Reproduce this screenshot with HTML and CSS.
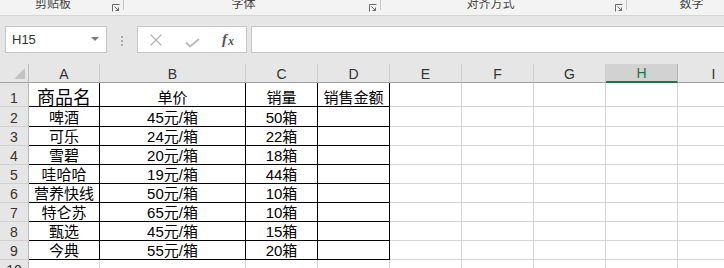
FILE: index.html
```html
<!DOCTYPE html>
<html lang="zh-CN">
<head>
<meta charset="utf-8">
<title>Sheet</title>
<link rel="stylesheet" href="styles.css">
</head>
<body>
<div class="ribbon">
  <div class="group g1">
    <div class="label">剪贴板</div>
    <svg class="launcher" width="8" height="8" viewBox="0 0 8 8"><path d="M0.5 7.5V0.5H7.5M2.5 2.5L6.5 6.5M6.5 3.5V6.5H3.5" fill="none" stroke="#6a6a6a" stroke-width="1"/></svg>
    <div class="sep"></div>
  </div>
  <div class="group g2">
    <div class="label">字体</div>
    <svg class="launcher" width="8" height="8" viewBox="0 0 8 8"><path d="M0.5 7.5V0.5H7.5M2.5 2.5L6.5 6.5M6.5 3.5V6.5H3.5" fill="none" stroke="#6a6a6a" stroke-width="1"/></svg>
    <div class="sep"></div>
  </div>
  <div class="group g3">
    <div class="label">对齐方式</div>
    <svg class="launcher" width="8" height="8" viewBox="0 0 8 8"><path d="M0.5 7.5V0.5H7.5M2.5 2.5L6.5 6.5M6.5 3.5V6.5H3.5" fill="none" stroke="#6a6a6a" stroke-width="1"/></svg>
    <div class="sep"></div>
  </div>
  <div class="group g4">
    <div class="label">数字</div>
  </div>
</div>

<div class="fbar">
  <div class="namebox">
    <span class="nb-text">H15</span>
    <span class="nb-arrow"></span>
  </div>
  <div class="dots"><span></span><span></span><span></span></div>
  <div class="fxbox">
    <div class="slot">
      <svg width="12" height="12" viewBox="0 0 12 12"><path d="M0.7 0.7L11.3 11.3M11.3 0.7L0.7 11.3" stroke="#b4b4b4" stroke-width="1.3" fill="none"/></svg>
    </div>
    <div class="slot slot-check">
      <svg width="15" height="10" viewBox="0 0 15 10"><path d="M1 4.5L5 8.5L14 1" stroke="#bcbcbc" stroke-width="2" fill="none"/></svg>
    </div>
    <div class="slot fx"><span class="fx-f">f</span><span class="fx-x">x</span></div>
  </div>
  <div class="finput"></div>
</div>

<div class="sheet">
  <div class="corner"><span class="tri"></span></div>
  <div class="ch">A</div><div class="ch">B</div><div class="ch">C</div><div class="ch">D</div><div class="ch">E</div><div class="ch">F</div><div class="ch">G</div><div class="ch sel">H</div><div class="ch">I</div>

  <div class="rh">1</div>
  <div class="c d big">商品名</div><div class="c d">单价</div><div class="c d">销量</div><div class="c d">销售金额</div><div class="c"></div><div class="c"></div><div class="c"></div><div class="c"></div><div class="c"></div>

  <div class="rh">2</div>
  <div class="c d">啤酒</div><div class="c d">45元/箱</div><div class="c d">50箱</div><div class="c d"></div><div class="c"></div><div class="c"></div><div class="c"></div><div class="c"></div><div class="c"></div>

  <div class="rh">3</div>
  <div class="c d">可乐</div><div class="c d">24元/箱</div><div class="c d">22箱</div><div class="c d"></div><div class="c"></div><div class="c"></div><div class="c"></div><div class="c"></div><div class="c"></div>

  <div class="rh">4</div>
  <div class="c d">雪碧</div><div class="c d">20元/箱</div><div class="c d">18箱</div><div class="c d"></div><div class="c"></div><div class="c"></div><div class="c"></div><div class="c"></div><div class="c"></div>

  <div class="rh">5</div>
  <div class="c d">哇哈哈</div><div class="c d">19元/箱</div><div class="c d">44箱</div><div class="c d"></div><div class="c"></div><div class="c"></div><div class="c"></div><div class="c"></div><div class="c"></div>

  <div class="rh">6</div>
  <div class="c d">营养快线</div><div class="c d">50元/箱</div><div class="c d">10箱</div><div class="c d"></div><div class="c"></div><div class="c"></div><div class="c"></div><div class="c"></div><div class="c"></div>

  <div class="rh">7</div>
  <div class="c d">特仑苏</div><div class="c d">65元/箱</div><div class="c d">10箱</div><div class="c d"></div><div class="c"></div><div class="c"></div><div class="c"></div><div class="c"></div><div class="c"></div>

  <div class="rh">8</div>
  <div class="c d">甄选</div><div class="c d">45元/箱</div><div class="c d">15箱</div><div class="c d"></div><div class="c"></div><div class="c"></div><div class="c"></div><div class="c"></div><div class="c"></div>

  <div class="rh">9</div>
  <div class="c d">今典</div><div class="c d">55元/箱</div><div class="c d">20箱</div><div class="c d"></div><div class="c"></div><div class="c"></div><div class="c"></div><div class="c"></div><div class="c"></div>

  <div class="rh">10</div>
  <div class="c"></div><div class="c"></div><div class="c"></div><div class="c"></div><div class="c"></div><div class="c"></div><div class="c"></div><div class="c"></div><div class="c"></div>
</div>
</body>
</html>
```
FILE: styles.css
```css
* { box-sizing: border-box; }

html, body {
  margin: 0;
  padding: 0;
  width: 724px;
  height: 268px;
  overflow: hidden;
  background: #ffffff;
  font-family: "Liberation Sans", "Noto Sans CJK SC", sans-serif;
}

/* ribbon group labels */
.ribbon {
  display: flex;
  height: 16px;
  background: #f3f3f3;
  border-bottom: 1px solid #d5d5d5;
  overflow: hidden;
}
.group {
  display: flex;
  align-items: flex-start;
  flex: none;
}
.g1 { width: 124px; }
.g2 { width: 257px; }
.g3 { width: 246px; }
.g4 { width: 129px; }
.label {
  flex: 1;
  text-align: center;
  font-family: "Noto Sans CJK SC", sans-serif;
  font-size: 12px;
  line-height: 12px;
  margin-top: -3px;
  color: #444444;
  white-space: nowrap;
  padding-right: 6px;
}
.g3 .label { padding-right: 15px; }
.g4 .label { padding-right: 0; }
.launcher {
  flex: none;
  margin-top: 4px;
  margin-right: 3px;
}
.sep {
  flex: none;
  width: 1px;
  height: 10px;
  background: #c8c8c8;
}

/* formula bar */
.fbar {
  display: flex;
  align-items: flex-start;
  height: 48px;
  padding-top: 10px;
  background: #e6e6e6;
  overflow: hidden;
}
.namebox {
  flex: none;
  margin-left: 5px;
  width: 102px;
  height: 27px;
  background: #ffffff;
  border: 1px solid #c6c6c6;
  display: flex;
  align-items: center;
  justify-content: space-between;
  padding: 0 7px 0 6px;
}
.nb-text {
  font-size: 13px;
  color: #333333;
  line-height: 16px;
}
.nb-arrow {
  width: 0;
  height: 0;
  border-left: 4px solid transparent;
  border-right: 4px solid transparent;
  border-top: 4px solid #7a7a7a;
  margin-top: -2px;
}
.dots {
  flex: none;
  margin-left: 14px;
  margin-top: 10px;
  width: 2px;
  display: flex;
  flex-direction: column;
  gap: 2px;
}
.dots span {
  display: block;
  width: 2px;
  height: 2px;
  background: #aaaaaa;
}
.fxbox {
  flex: none;
  margin-left: 14px;
  width: 110px;
  height: 27px;
  background: #ffffff;
  border: 1px solid #c6c6c6;
  display: flex;
  align-items: center;
}
.slot {
  width: 36px;
  height: 25px;
  display: flex;
  align-items: center;
  justify-content: center;
}
.slot-check { padding-top: 6px; }
.fx {
  font-family: "Liberation Serif", serif;
  font-style: italic;
  color: #555555;
  align-items: center;
}
.fx-f { font-size: 15px; font-weight: bold; }
.fx-x { font-size: 12px; font-weight: bold; margin-left: 1px; margin-top: 3px; }
.finput {
  flex: none;
  margin-left: 4px;
  width: 500px;
  height: 27px;
  background: #ffffff;
  border: 1px solid #c6c6c6;
}

/* sheet grid */
.sheet {
  display: grid;
  grid-template-columns: 29px 71px 146px 72px 72px 72px 72px 72px 72px 72px;
  grid-template-rows: 19px 24px 20px repeat(8, 19px);
  width: 750px;
}
.corner {
  background: #e6e6e6;
  border-right: 1px solid #bdbdbd;
  border-bottom: 1px solid #a0a0a0;
  display: flex;
  justify-content: flex-end;
  align-items: flex-end;
  padding: 0 3px 3px 0;
}
.tri {
  width: 0;
  height: 0;
  border-left: 11px solid transparent;
  border-bottom: 11px solid #c3c3c3;
}
.ch {
  background: #e6e6e6;
  border-right: 1px solid #cccccc;
  border-bottom: 1px solid #a0a0a0;
  display: flex;
  align-items: flex-end;
  justify-content: center;
  font-size: 14px;
  line-height: 16px;
  color: #333333;
}
.ch.sel {
  background: #d2d2d2;
  border-bottom: 2px solid #217346;
  border-right-color: #b4b4b4;
  color: #217346;
  line-height: 15px;
}
.rh {
  background: #e6e6e6;
  border-right: 1px solid #b8b8b8;
  border-bottom: 1px solid #d0d0d0;
  display: flex;
  align-items: flex-end;
  justify-content: center;
  font-size: 14px;
  line-height: 16px;
  color: #333333;
}
.c {
  border-right: 1px solid #d4d4d4;
  border-bottom: 1px solid #d4d4d4;
  display: flex;
  align-items: flex-end;
  justify-content: center;
  font-size: 15px;
  line-height: 16px;
  color: #000000;
  white-space: nowrap;
}
.c.d {
  border-right-color: #000000;
  border-bottom-color: #000000;
}
.c.big {
  font-size: 18px;
}
```
